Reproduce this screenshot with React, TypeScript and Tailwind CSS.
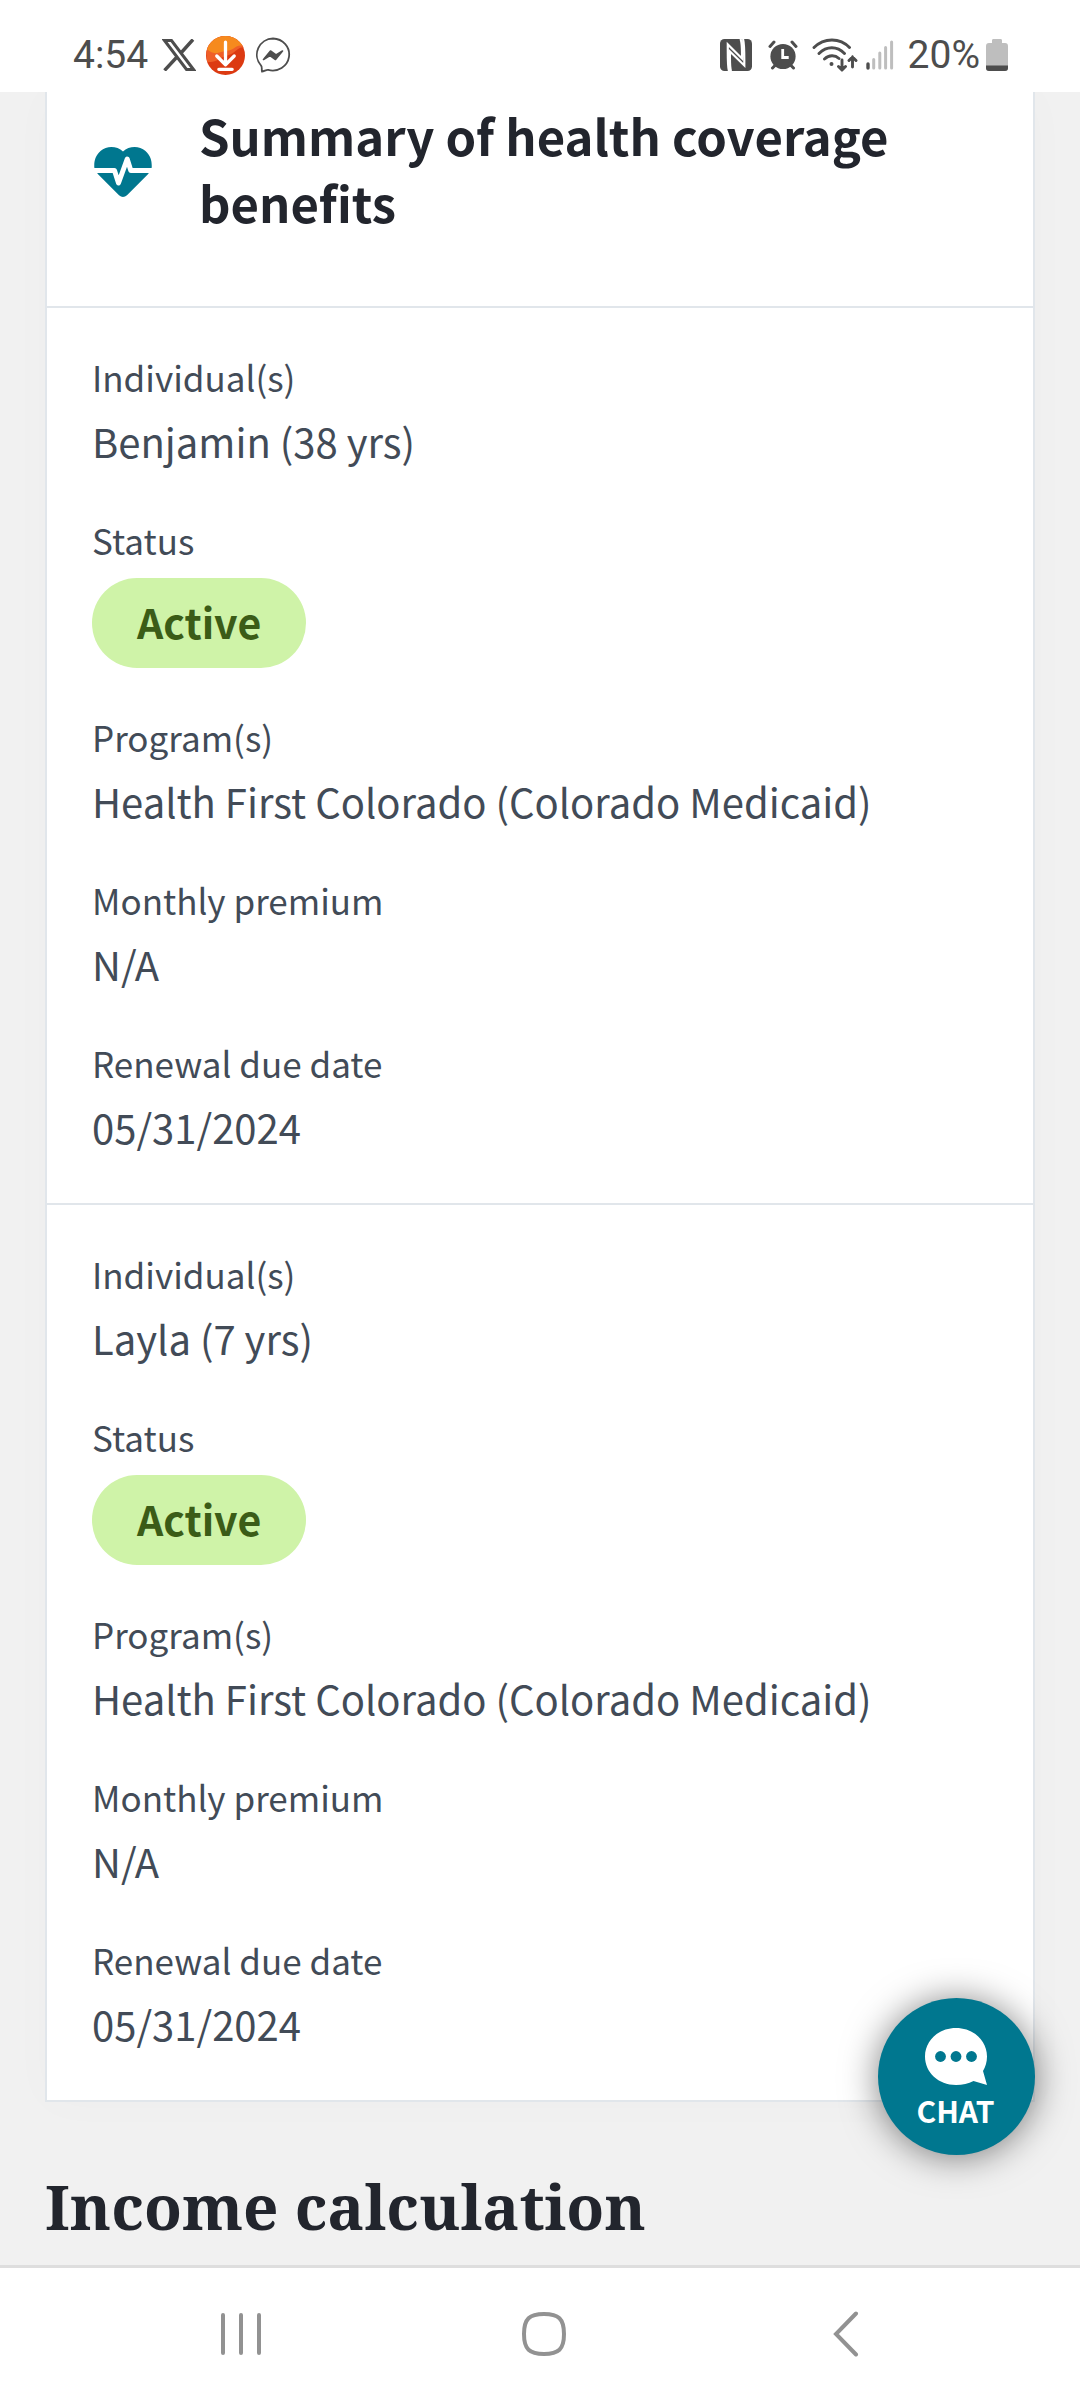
const members = [
  {
    name: "Benjamin (38 yrs)",
    status: "Active",
    program: "Health First Colorado (Colorado Medicaid)",
    premium: "N/A",
    renewal: "05/31/2024",
  },
  {
    name: "Layla (7 yrs)",
    status: "Active",
    program: "Health First Colorado (Colorado Medicaid)",
    premium: "N/A",
    renewal: "05/31/2024",
  },
];

function StatusBar() {
  return (
    <header className="flex h-[92px] items-center justify-between bg-white pt-[18px] pr-[72px] pl-[73px] font-['Roboto',sans-serif] text-[39px] leading-[48px] text-[#4d4d4d]">
      <div className="flex items-center gap-2.5">
        <span className="pr-1">4:54</span>
        <svg width="34" height="32" viewBox="0 0 34 32" fill="none" stroke="#4d4d4d">
          <path d="M2.500 1.500h7L31.500 30.500h-7z" strokeWidth="3" />
          <path d="M31 .5 18.500 14.500M14.500 18.500 2.500 31.500" strokeWidth="3.400" />
        </svg>
        <svg width="39" height="39" viewBox="0 0 38 38">
          <circle cx="19" cy="19" r="19" fill="#dc3a12" />
          <path d="M.4 15C2 6 10 0 19 0c8 0 15 5 17.800 11.500C31 10 29 17 21 19 13 21 9 27 1 25z" fill="#ef5f28" />
          <path d="M1 13C4 5 11 0 19 0c7 0 13 3.500 16.500 9.500C29 8 28 14 20 14.500 12 15 9 20 1 13z" fill="#f68a1e" />
          <path d="M19 6v22M10.500 19.500 19 28l8.500-8.500M12.500 32.500h13" fill="none" stroke="#fff" strokeWidth="3.200" strokeLinecap="round" strokeLinejoin="round" />
        </svg>
        <svg width="36" height="36" viewBox="0 0 36 36" fill="none">
          <path d="M18 1.500a16.500 16 0 1 1-4.800 31.400c-1.800-.4-4.200 1.600-6.200 1.600-.6-2.200.4-4.600-1-6A16.200 16.200 0 0 1 18 1.500z" stroke="#4d4d4d" strokeWidth="1.800" />
          <path d="m8.500 22.500 7-8.500 5.500 4 6.500-4-7 8.500-5.500-4z" fill="#4d4d4d" stroke="#4d4d4d" strokeWidth="1.600" strokeLinejoin="round" />
        </svg>
      </div>
      <div className="flex items-center">
        <svg width="32" height="32" viewBox="0 0 32 32" className="mr-4">
          <rect width="32" height="32" rx="4.500" fill="#4d4d4d" />
          <path d="M9 32C7.600 28 7.800 22 7.800 5.500L22 19.500C22.200 9 22.300 5 20.600 0M23 0c1.500 5 1.300 15 1.300 26.500L10 12.500C9.800 23 9.600 28 11 32" fill="none" stroke="#fff" strokeWidth="2.200" />
        </svg>
        <svg width="30" height="30" viewBox="0 0 30 30" className="mr-3.5" fill="none">
          <circle cx="15" cy="16.500" r="12.600" fill="#4d4d4d" />
          <path d="m2 6.500 4-4.500M28 6.500 24 2M4.500 28l3-3M25.500 28l-3-3" stroke="#4d4d4d" strokeWidth="3" strokeLinecap="round" />
          <path d="M14.700 9v8.500h6" stroke="#fff" strokeWidth="2.800" />
        </svg>
        <svg width="46" height="34" viewBox="0 0 46 34" className="mr-2" fill="none" stroke="#4d4d4d" strokeWidth="2.900" strokeLinecap="round">
          <path d="M2 9.500C12-.6 28-.6 37.500 9.500M7 15.500c7.500-7.600 18.200-7.600 25.500 0M12.500 21c4.500-4.300 10.500-4.300 14.500-.5" />
          <circle cx="19.500" cy="26" r="1" fill="#4d4d4d" strokeWidth="2" />
          <path d="M30 22v10M26.500 28.500 30 32l3.500-3.500M40.500 29V19M37 22.500l3.500-3.500 3.500 3.500" />
        </svg>
        <svg width="28" height="30" viewBox="0 0 28 30" className="mr-3.5" stroke="#bebebe" strokeWidth="3" strokeLinecap="round">
          <path d="M2 24v4" stroke="#4d4d4d" strokeWidth="3.400" />
          <path d="M7.700 19.500v8.500M13.800 13v15M19.600 7.500v20.500M25.600 2v26" />
        </svg>
        <span>20%</span>
        <svg width="22" height="32" viewBox="0 0 22 32" className="ml-1.5">
          <path d="M7 0h8q1 0 1 1.500V4h3q3 0 3 3v22q0 3-3 3H3q-3 0-3-3V7q0-3 3-3h3V1.500Q6 0 7 0z" fill="#bebebe" />
          <path d="M0 26.500h22V29q0 3-3 3H3q-3 0-3-3z" fill="#4d4d4d" />
        </svg>
      </div>
    </header>
  );
}

function Field({ label, value }: { label: string; value: string }) {
  return (
    <div>
      <dt className="text-[35px] leading-[60px]">{label}</dt>
      <dd className="text-[40px] leading-[68px]">{value}</dd>
    </div>
  );
}

function Member({ member }: { member: (typeof members)[number] }) {
  return (
    <dl className="flex flex-col gap-[35px] border-t-2 border-[#e1e6eb] px-[45px] pt-[39px] pb-[42px]">
      <Field label="Individual(s)" value={member.name} />
      <div>
        <dt className="text-[35px] leading-[60px]">Status</dt>
        <dd className="flex pt-2 pb-1">
          <span className="rounded-full bg-[#cff3a8] px-[45px] pb-1 text-[41px] leading-[86px] font-bold text-[#3b5c17]">
            {member.status}
          </span>
        </dd>
      </div>
      <Field label="Program(s)" value={member.program} />
      <Field label="Monthly premium" value={member.premium} />
      <Field label="Renewal due date" value={member.renewal} />
    </dl>
  );
}

export default function App() {
  return (
    <div className="flex min-h-screen flex-col bg-[#f1f1f1] font-['Noto_Sans_CJK_SC',sans-serif] text-[#424b57]">
      <StatusBar />

      <main className="relative flex-1 overflow-hidden px-[45px]">
        <section className="border-x-2 border-b-2 border-[#e1e6eb] bg-white shadow-[0_0_45px_rgba(0,0,0,0.02)]">
          <div className="flex items-center gap-[47px] px-[45px] pt-[9px] pb-[71px]">
            <svg width="58" height="50" viewBox="0 0 58 50" className="mt-2 ml-0.5 shrink-0">
              <path d="M29 4.500C23-1 13-1.500 6.500 4 1 9 0 14.500.3 20.500q.6 4 4 7L25 48.200q4 3.600 8 0L53.700 27.500q3.400-3 4-7C58 14.500 57 9 51.500 4 45-1.500 35-1 29 4.500z" fill="#00778f" />
              <path d="M0 23.500h20.500L24.500 36l8.700-24 3.600 11.500H58" fill="none" stroke="#fff" strokeWidth="5" strokeLinejoin="round" />
            </svg>
            <h2 className="text-[49px] leading-[67px] font-bold text-[#22252d]">
              Summary of health coverage benefits
            </h2>
          </div>
          {members.map((m) => (
            <Member key={m.name} member={m} />
          ))}
        </section>

        <h1 className="pt-16 pb-[18px] font-['Noto_Serif','Liberation_Serif',serif] text-[62px] leading-[80px] font-bold text-[#22252d]">
          Income calculation
        </h1>

        <button
          type="button"
          className="absolute right-[45px] bottom-[110px] flex size-[157px] flex-col items-center rounded-full bg-[#00778f] pt-[30px] pr-0.5 text-white shadow-[0_2px_36px_rgba(0,0,0,0.5)]"
        >
          <svg width="62" height="58" viewBox="0 0 62 58">
            <path d="M31 0c17.500 0 31 12.500 31 28.500 0 5.500-1.500 10.500-4 14.500l4 14-13.500-4c-5 2.800-11 4-17.500 4C13.500 57 0 44.500 0 28.500S13.500 0 31 0z" fill="#fff" />
            <circle cx="15.500" cy="28.500" r="5.400" fill="#00778f" />
            <circle cx="31" cy="28.500" r="5.400" fill="#00778f" />
            <circle cx="46.500" cy="28.500" r="5.400" fill="#00778f" />
          </svg>
          <span className="mt-1 text-[30px] leading-[40px] font-bold">CHAT</span>
        </button>
      </main>

      <nav className="grid h-[135px] grid-cols-3 place-items-center border-t-[3px] border-[#dedede] bg-white pr-[82px] pl-[90px]">
        <button type="button" aria-label="Recent apps">
          <svg width="44" height="44" viewBox="0 0 44 44" stroke="#929292" strokeWidth="4" strokeLinecap="round">
            <path d="M4 3v38M22 3v38M40 3v38" />
          </svg>
        </button>
        <button type="button" aria-label="Home">
          <svg width="44" height="44" viewBox="0 0 44 44" fill="none" stroke="#929292" strokeWidth="4">
            <path d="M22 2c14.500 0 20 4.500 20 20s-5.500 20-20 20S2 37.500 2 22 7.500 2 22 2z" />
          </svg>
        </button>
        <button type="button" aria-label="Back">
          <svg width="44" height="46" viewBox="0 0 44 46" fill="none" stroke="#929292" strokeWidth="4" strokeLinecap="round">
            <path d="M31 2.500 11 23l20 20.500" />
          </svg>
        </button>
      </nav>
    </div>
  );
}
